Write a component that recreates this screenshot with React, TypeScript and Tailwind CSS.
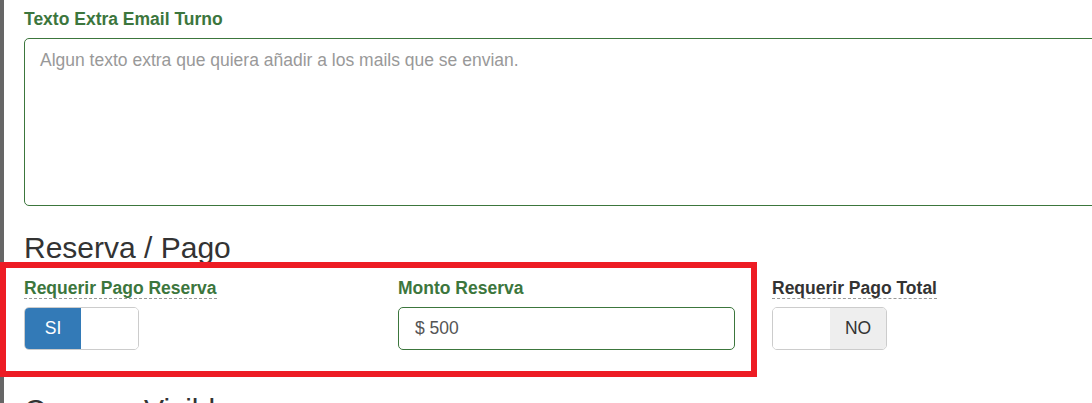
import { FC } from "react";

const font = { fontFamily: '"Liberation Sans", Arial, sans-serif' };

const Label: FC<{ text: string; green?: boolean; hint?: boolean }> = ({ text, green = true, hint = false }) => (
    <div className={`text-[17.5px] leading-[22px] font-bold ${green ? "text-[#3c763d]" : "text-[#333]"}`}>
        {hint ? <span className="border-b border-dashed border-[#999]">{text}</span> : text}
    </div>
);

const Toggle: FC<{ on: boolean }> = ({ on }) => (
    <div className="mt-[8px] flex h-[43px] w-[115px] overflow-hidden rounded-[5px] border border-[#ccc] text-[17.5px]">
        {on ? (
            <>
                <div className="flex w-[56px] items-center justify-center bg-[#337ab7] text-white">SI</div>
                <div className="flex-1 bg-white"></div>
            </>
        ) : (
            <>
                <div className="w-[57px] bg-white"></div>
                <div className="flex flex-1 items-center justify-center bg-[#eee] text-[#333]">NO</div>
            </>
        )}
    </div>
);

const App: FC = () => {
    return <div className="relative flex h-[403px] w-[1092px] overflow-hidden bg-white" style={font}>
        <div className="w-[4px] shrink-0 bg-[#666]"></div>
        <div className="pl-[20px] pt-[8px]">
            <Label text="Texto Extra Email Turno" />
            <div className="mt-[8px] h-[168px] w-[1100px] rounded-[5px] border border-[#3c763d] px-[15px] pt-[9px] text-[17.5px] leading-[25px] text-[#999]">
                Algun texto extra que quiera añadir a los mails que se envian.
            </div>

            <h3 className="mt-[25px] text-[30px] leading-[33px] text-[#333]">Reserva / Pago</h3>

            <div className="mt-[13px] flex gap-[37px]">
                <div className="w-[337px]">
                    <Label text="Requerir Pago Reserva" hint />
                    <Toggle on />
                </div>
                <div className="w-[337px]">
                    <Label text="Monto Reserva" />
                    <div className="mt-[8px] flex h-[43px] items-center rounded-[5px] border border-[#3c763d] px-[16px] text-[17.5px] text-[#555]">
                        $ 500
                    </div>
                </div>
                <div className="w-[337px]">
                    <Label text="Requerir Pago Total" green={false} hint />
                    <Toggle on={false} />
                </div>
            </div>

            <h3 className="mt-[43px] text-[30px] leading-[33px] text-[#333]">Campos Visibles</h3>
        </div>

        {/* annotation box */}
        <div className="pointer-events-none absolute left-0 top-[262px] h-[115px] w-[757px] border-[6px] border-[#ed1c24]"></div>
    </div>
}

export default App;
